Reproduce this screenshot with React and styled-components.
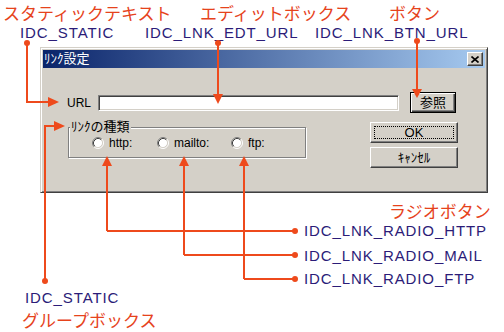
import React from "react";
import styled, { createGlobalStyle } from "styled-components";

const Global = createGlobalStyle`
  html, body { margin: 0; padding: 0; background: #fff; }
  body { font-family: "Noto Sans CJK JP", "Liberation Sans", sans-serif; }
`;

const Canvas = styled.div`
  position: relative;
  width: 504px;
  height: 332px;
  overflow: hidden;
  background: #fff;
`;

const Note = styled.span`
  position: absolute;
  left: ${(p) => p.$x}px;
  top: ${(p) => p.$y}px;
  white-space: nowrap;
  line-height: 1;
  font-weight: 400;
  ${(p) =>
    p.$kind === "id"
      ? `
    font-family: "Liberation Sans", Arial, sans-serif;
    font-size: 15px;
    letter-spacing: 0.9px;
    color: #2b1c78;
  `
      : `
    font-family: "Noto Sans CJK JP", sans-serif;
    font-size: 17px;
    color: #e6431c;
  `}
`;

const Window = styled.div`
  position: absolute;
  left: 40px;
  top: 47px;
  width: 448px;
  height: 146px;
  box-sizing: border-box;
  background: #d4d0c8;
  border: 1px solid;
  border-color: #d4d0c8 #404040 #404040 #d4d0c8;
  box-shadow: inset 1px 1px 0 #fff, inset -1px -1px 0 #808080;
  padding: 2px;
  display: flex;
  flex-direction: column;
  font-family: "Liberation Sans", "Noto Sans CJK JP", sans-serif;
  font-weight: 400;
  font-size: 12px;
  color: #000;
`;

const TitleBar = styled.div`
  height: 18px;
  flex: none;
  display: flex;
  align-items: center;
  justify-content: space-between;
  padding: 0 2px 0 1px;
  background: linear-gradient(to right, #0a246a, #a6caf0);
  color: #fff;
  font-size: 13px;
  line-height: 18px;
`;

const CloseButton = styled.div`
  width: 16px;
  height: 14px;
  box-sizing: border-box;
  background: #d4d0c8;
  border: 1px solid;
  border-color: #fff #404040 #404040 #fff;
  box-shadow: inset -1px -1px 0 #808080;
  display: flex;
  align-items: center;
  justify-content: center;
`;

const Body = styled.div`
  flex: 1;
  padding: 24px 0 0 24px;
  display: flex;
  flex-direction: column;
`;

const UrlRow = styled.div`
  display: flex;
  align-items: center;
  height: 21px;
`;

const FieldLabel = styled.span`
  width: 31px;
  line-height: 14px;
`;

const Edit = styled.div`
  width: 301px;
  height: 16px;
  box-sizing: border-box;
  background: #fff;
  border: 1px solid;
  border-color: #808080 #fff #fff #808080;
  box-shadow: inset 1px 1px 0 #404040, inset -1px -1px 0 #d4d0c8;
`;

const Button = styled.div`
  position: relative;
  width: ${(p) => p.$w}px;
  height: 21px;
  margin-left: ${(p) => p.$ml || 0}px;
  box-sizing: border-box;
  background: #d4d0c8;
  border: 1px solid;
  border-color: ${(p) => (p.$default ? "#000" : "#fff #404040 #404040 #fff")};
  box-shadow: ${(p) =>
    p.$default
      ? "inset 1px 1px 0 #fff, inset -1px -1px 0 #404040, inset -2px -2px 0 #808080"
      : "inset -1px -1px 0 #808080"};
  display: flex;
  align-items: center;
  justify-content: center;
  font-size: 13px;
  line-height: 14px;
  ${(p) =>
    p.$focus &&
    `
    &::after {
      content: "";
      position: absolute;
      inset: 3px;
      border: 1px dotted #000;
    }
  `}
`;

const LowerRow = styled.div`
  display: flex;
  align-items: flex-start;
  margin-top: 8px;
`;

const Group = styled.fieldset`
  margin: 0 0 0 1px;
  padding: 0 0 0 23px;
  width: 238px;
  height: 37px;
  box-sizing: border-box;
  border: 1px solid #808080;
  box-shadow: inset 1px 1px 0 #fff, 1px 1px 0 #fff;
  display: grid;
  grid-template-columns: 65px 74px auto;
  align-items: center;
  min-inline-size: 0;
`;

const GroupLegend = styled.legend`
  margin-left: -22px;
  padding: 0 1px;
  font-size: 13px;
  line-height: 12px;
  background: #d4d0c8;
`;

const Radio = styled.label`
  display: flex;
  align-items: center;
  gap: 5px;
  font-size: 12px;
  line-height: 14px;
  margin-top: -4px;
`;

const ButtonColumn = styled.div`
  display: flex;
  flex-direction: column;
  gap: 4px;
  margin-left: 64px;
  margin-top: 1px;
`;

const Leaders = styled.svg`
  position: absolute;
  left: 0;
  top: 0;
  pointer-events: none;
`;

const RadioDot = () => (
  <svg width="12" height="12" viewBox="0 0 12 12">
    <circle cx="6" cy="6" r="4.5" fill="#fff" />
    <path d="M2.11 9.89 A5.5 5.5 0 0 1 9.89 2.11" fill="none" stroke="#808080" />
    <path d="M9.89 2.11 A5.5 5.5 0 0 1 2.11 9.89" fill="none" stroke="#fff" />
    <path d="M2.82 9.18 A4.5 4.5 0 0 1 9.18 2.82" fill="none" stroke="#404040" />
    <path d="M9.18 2.82 A4.5 4.5 0 0 1 2.82 9.18" fill="none" stroke="#d4d0c8" />
  </svg>
);

const CloseGlyph = () => (
  <svg width="8" height="7" viewBox="0 0 8 7">
    <path d="M0.5 0.5 L7.5 6.5 M7.5 0.5 L0.5 6.5" stroke="#000" strokeWidth="1.6" />
  </svg>
);

const LC = "#ee4a1c";

const Arrow = ({ d }) => <path d={d} fill={LC} stroke="none" />;

export default function App() {
  return (
    <Canvas>
      <Global />
      <Note $x={3} $y={4}>スタティックテキスト</Note>
      <Note $x={20} $y={25} $kind="id">IDC_STATIC</Note>
      <Note $x={200} $y={4}>エディットボックス</Note>
      <Note $x={145} $y={25} $kind="id">IDC_LNK_EDT_URL</Note>
      <Note $x={389} $y={4}>ボタン</Note>
      <Note $x={315} $y={25} $kind="id">IDC_LNK_BTN_URL</Note>

      <Window>
        <TitleBar>
          <span>ﾘﾝｸ設定</span>
          <CloseButton>
            <CloseGlyph />
          </CloseButton>
        </TitleBar>
        <Body>
          <UrlRow>
            <FieldLabel>URL</FieldLabel>
            <Edit />
            <Button $w={46} $ml={11} $default>
              参照
            </Button>
          </UrlRow>
          <LowerRow>
            <Group>
              <GroupLegend>ﾘﾝｸの種類</GroupLegend>
              <Radio>
                <RadioDot />
                http:
              </Radio>
              <Radio>
                <RadioDot />
                mailto:
              </Radio>
              <Radio>
                <RadioDot />
                ftp:
              </Radio>
            </Group>
            <ButtonColumn>
              <Button $w={88} $focus>
                OK
              </Button>
              <Button $w={88}>ｷｬﾝｾﾙ</Button>
            </ButtonColumn>
          </LowerRow>
        </Body>
      </Window>

      <Note $x={389} $y={202}>ラジオボタン</Note>
      <Note $x={304} $y={223} $kind="id">IDC_LNK_RADIO_HTTP</Note>
      <Note $x={304} $y={248} $kind="id">IDC_LNK_RADIO_MAIL</Note>
      <Note $x={304} $y={271} $kind="id">IDC_LNK_RADIO_FTP</Note>
      <Note $x={25} $y={290} $kind="id">IDC_STATIC</Note>
      <Note $x={22} $y={311}>グループボックス</Note>

      <Leaders width="504" height="332" viewBox="0 0 504 332">
        <g fill="none" stroke={LC} strokeWidth="2">
          <path d="M27 43 V102 H50" />
          <path d="M218 43 V95" />
          <path d="M417 41 V90" />
          <path d="M45 281 V126 H55" />
          <path d="M107 231 V164 M107 231 H295" />
          <path d="M184 255 V164 M184 255 H295" />
          <path d="M244 279 V164 M244 279 H295" />
        </g>
        <g fill={LC}>
          <circle cx="27" cy="43" r="3" />
          <circle cx="218" cy="43" r="3" />
          <circle cx="417" cy="41" r="3" />
          <circle cx="45" cy="281" r="3" />
          <circle cx="295" cy="231" r="3" />
          <circle cx="295" cy="255" r="3" />
          <circle cx="295" cy="279" r="3" />
        </g>
        <Arrow d="M48 97 L59 102 L48 107 Z" />
        <Arrow d="M213 94 L218 104 L223 94 Z" />
        <Arrow d="M412 89 L417 98 L422 89 Z" />
        <Arrow d="M54 121 L65 126 L54 131 Z" />
        <Arrow d="M102 166 L107 156 L112 166 Z" />
        <Arrow d="M179 166 L184 156 L189 166 Z" />
        <Arrow d="M239 166 L244 156 L249 166 Z" />
      </Leaders>
    </Canvas>
  );
}
